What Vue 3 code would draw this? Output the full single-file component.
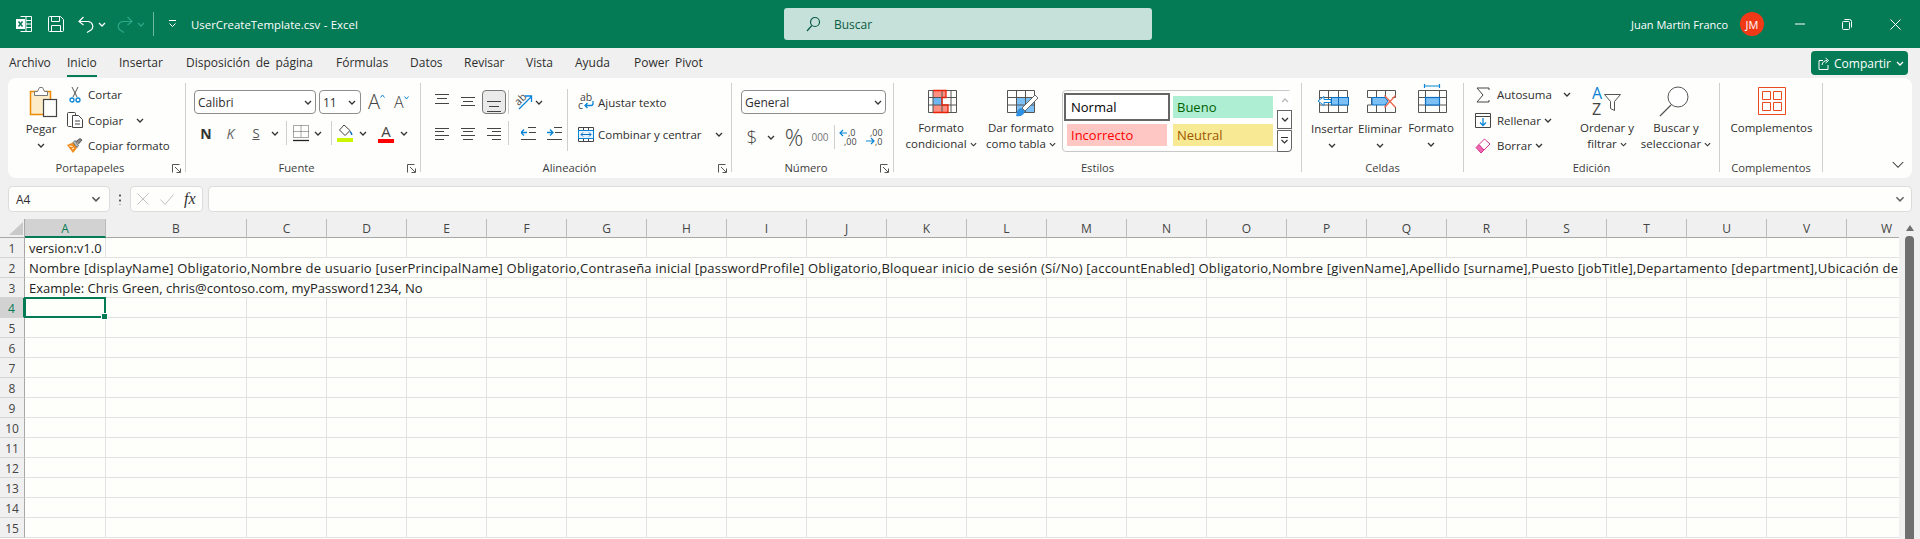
<template>
  <div class="app">
    <svg class="defs" width="0" height="0">
      <symbol id="chev" viewBox="0 0 8 5">
        <path d="M1 1l3 3 3-3" fill="none" stroke="currentColor" stroke-width="1.3" />
      </symbol>
      <symbol id="launcher" viewBox="0 0 9 9">
        <path d="M.5 8.5V.5h7M3 3l5 5M8.5 4.5v4h-4" fill="none" stroke="#555" stroke-width="1" />
      </symbol>
    </svg>

    <header class="titlebar">
      <div class="title-left">
        <svg class="qat-excel" width="16" height="16" viewBox="0 0 16 16">
          <path d="M4.5.5h11v15h-11M10 .5v15M10 4.5h5.5M10 8h5.5M10 11.5h5.5" fill="none" stroke="#fff" />
          <rect x="0" y="3" width="9" height="10" fill="#fff" />
          <path d="M2.5 5.5l4 5M6.5 5.5l-4 5" stroke="#047a55" stroke-width="1.5" />
        </svg>
        <svg class="qat-save" width="16" height="16" viewBox="0 0 16 16">
          <path d="M.5 1.5a1 1 0 0 1 1-1h11l3 3v11a1 1 0 0 1-1 1h-13a1 1 0 0 1-1-1zM3.5.5v5h8v-5M3.5 15.500v-6h9v6" fill="none" stroke="#fff" />
        </svg>
        <svg class="qat-undo" width="16" height="18" viewBox="0 0 16 18">
          <path d="M5.500 2L1 6.500 5.500 10M1 6.500h9a4.800 4.800 0 0 1 3 8.500L9 17.500" fill="none" stroke="#fff" stroke-width="1.200" />
        </svg>
        <svg class="chev qat-chev"><use href="#chev" /></svg>
        <svg class="qat-redo" width="16" height="18" viewBox="0 0 16 18">
          <path d="M10.500 2L15 6.500 10.500 10M15 6.500H6a4.800 4.800 0 0 0-3 8.500l4 2.500" fill="none" stroke="#2ba888" stroke-width="1.200" />
        </svg>
        <svg class="chev qat-chev dim"><use href="#chev" /></svg>
        <span class="qat-sep"></span>
        <svg class="qat-custom" width="9" height="8" viewBox="0 0 9 8">
          <path d="M1 .5h7M1.500 3.500L4.500 6.500l3-3" fill="none" stroke="#fff" />
        </svg>
        <span class="doc-title">UserCreateTemplate.csv - Excel</span>
      </div>
      <div class="search">
        <svg width="15" height="16" viewBox="0 0 15 16">
          <circle cx="9" cy="6" r="4.500" fill="none" stroke="#0a5c44" stroke-width="1.200" />
          <path d="M5.800 9.500L1 15" stroke="#0a5c44" stroke-width="1.200" />
        </svg>
        <span>Buscar</span>
      </div>
      <div class="title-right">
        <span class="user">Juan Martín Franco</span>
        <span class="avatar">JM</span>
        <svg class="win-min" width="10" height="10" viewBox="0 0 10 10"><path d="M0 5h10" stroke="#fff" /></svg>
        <svg class="win-restore" width="10" height="11" viewBox="0 0 10 11">
          <path d="M.5 3.500a1 1 0 0 1 1-1h5a1 1 0 0 1 1 1v6a1 1 0 0 1-1 1h-5a1 1 0 0 1-1-1zM2.500.5h5a2 2 0 0 1 2 2v6" fill="none" stroke="#fff" />
        </svg>
        <svg class="win-close" width="11" height="11" viewBox="0 0 11 11"><path d="M.5.5l10 10M10.500.5l-10 10" stroke="#fff" /></svg>
      </div>
    </header>

    <nav class="tabs">
      <div class="tablist">
        <span v-for="t in tabs" :key="t" class="tab" :class="{ active: t === 'Inicio' }"><span>{{ t }}</span></span>
      </div>
      <button class="share">
        <svg width="12" height="13" viewBox="0 0 12 13">
          <path d="M5 3.500H1v9h9V8M4 8c.5-3 2.500-4.500 5-4.500M7.500 1L10.500 3.500 7.500 6" fill="none" stroke="#fff" />
        </svg>
        <span>Compartir</span>
        <svg class="chev"><use href="#chev" /></svg>
      </button>
    </nav>

    <section class="ribbon">
      <!-- Portapapeles -->
      <div class="group g-clip">
        <div class="group-body">
          <div class="big pegar">
            <svg class="big-icon" width="38" height="37" viewBox="0 0 38 37">
              <rect x="8.500" y="8.500" width="20" height="23" fill="#fdecc8" stroke="#ed8b00" stroke-width="1.500" />
              <path d="M12.500 12.500v-4h3l2-4h3l2 4h3v4z" fill="#fff" stroke="#777" />
              <rect x="21.500" y="16.500" width="13" height="17" fill="#fdfdfb" stroke="#444" stroke-width="1.200" />
            </svg>
            <span class="big-text">Pegar</span>
            <span class="big-text"><svg class="chev"><use href="#chev" /></svg></span>
          </div>
          <div class="small-list">
            <div class="small-row">
              <span class="small-ico">
                <svg width="12" height="16" viewBox="0 0 12 16">
                  <path d="M3 0l5 10M9 0L4 10" stroke="#555" fill="none" />
                  <circle cx="3" cy="13" r="2" fill="none" stroke="#0a84d6" stroke-width="1.300" />
                  <circle cx="9" cy="13" r="2" fill="none" stroke="#0a84d6" stroke-width="1.300" />
                </svg>
              </span>
              <span>Cortar</span>
            </div>
            <div class="small-row">
              <span class="small-ico">
                <svg width="16" height="16" viewBox="0 0 16 16">
                  <path d="M4.500 14.500h-3a1 1 0 0 1-1-1v-12a1 1 0 0 1 1-1h6a1 1 0 0 1 1 1v2" fill="none" stroke="#444" />
                  <path d="M5.500 3.500h6l4 4v8h-10zM8 9h5M8 12h5" fill="#fff" stroke="#444" />
                </svg>
              </span>
              <span>Copiar</span>
              <svg class="chev copy-chev"><use href="#chev" /></svg>
            </div>
            <div class="small-row">
              <span class="small-ico">
                <svg width="16" height="15" viewBox="0 0 16 15">
                  <path d="M0 7l6-2.500 4 5.500-4 5z" fill="#f28c1e" />
                  <path d="M2.500 8l3 .5M5 11l2-1" stroke="#fff" />
                  <path d="M6 4.500l2-2 3.500 5-1.500 2z" fill="#bbb" stroke="#555" stroke-width=".8" />
                  <path d="M9 3.500L13 .5 15 2l-3.500 4" fill="#888" stroke="#444" stroke-width=".8" />
                </svg>
              </span>
              <span>Copiar formato</span>
            </div>
          </div>
        </div>
        <div class="group-label">
          <span>Portapapeles</span>
          <svg class="launcher"><use href="#launcher" /></svg>
        </div>
      </div>

      <!-- Fuente -->
      <div class="group g-font">
        <div class="group-body col">
          <div class="font-row1">
            <div class="combo font-name"><span>Calibri</span><svg class="chev"><use href="#chev" /></svg></div>
            <div class="combo font-size"><span>11</span><svg class="chev"><use href="#chev" /></svg></div>
            <span class="grow-a big-a">A<svg width="5" height="4" viewBox="0 0 5 4"><path d="M.5 3.500l2-2.500 2 2.500" fill="none" stroke="#0a84d6" /></svg></span>
            <span class="grow-a small-a">A<svg width="5" height="4" viewBox="0 0 5 4"><path d="M.5.5l2 2.500 2-2.500" fill="none" stroke="#0a84d6" /></svg></span>
          </div>
          <div class="font-row2">
            <b class="fmt-n">N</b>
            <i class="fmt-k">K</i>
            <u class="fmt-s">S</u>
            <svg class="chev"><use href="#chev" /></svg>
            <span class="vsep"></span>
            <svg width="16" height="17" viewBox="0 0 16 17">
              <path d="M.5.500h15v12H.5zM8 .5v12M.5 6.500h15" fill="none" stroke="#555" stroke-dasharray="1 1" />
              <path d="M0 15.500h16" stroke="#222" stroke-width="1.300" />
            </svg>
            <svg class="chev"><use href="#chev" /></svg>
            <span class="vsep"></span>
            <svg width="16" height="18" viewBox="0 0 16 18">
              <path d="M7 1l6 5.500-5 5-5.500-5.500z" fill="none" stroke="#444" />
              <path d="M13 7.500c1.500 1.500 2 2.500 1.500 3.500" fill="none" stroke="#0a6ec2" stroke-width="1.500" />
              <rect y="14" width="16" height="4" fill="#ccf500" />
            </svg>
            <svg class="chev"><use href="#chev" /></svg>
            <span class="color-a">A<i></i></span>
            <svg class="chev"><use href="#chev" /></svg>
          </div>
        </div>
        <div class="group-label">
          <span>Fuente</span>
          <svg class="launcher"><use href="#launcher" /></svg>
        </div>
      </div>

      <!-- Alineación -->
      <div class="group g-align">
        <div class="group-body">
          <div class="align-left">
            <div class="align-row1">
              <svg width="14" height="24" viewBox="0 0 14 24"><path d="M0 4.500h14M2 8.500h10M0 13.500h14" stroke="#444" /></svg>
              <svg width="14" height="24" viewBox="0 0 14 24"><path d="M0 7.500h14M2 11.500h10M0 15.500h14" stroke="#444" /></svg>
              <span class="align-on">
                <svg width="14" height="24" viewBox="0 0 14 24"><path d="M0 11.500h14M2 16.500h10M0 21.500h14" stroke="#444" /></svg>
              </span>
              <span class="vsep"></span>
              <svg class="text-ico" width="18" height="18" viewBox="0 0 18 18">
                <text x="1" y="11" transform="rotate(-45 5 9)" class="ico-text">ab</text>
                <path d="M4 16L16 4M10 3h6.500v6" fill="none" stroke="#0a84d6" stroke-width="1.300" />
              </svg>
              <svg class="chev"><use href="#chev" /></svg>
            </div>
            <div class="align-row2">
              <svg width="14" height="24" viewBox="0 0 14 24"><path d="M0 7.500h14M0 10.500h9M0 14.500h14M0 18.500h9" stroke="#444" /></svg>
              <svg width="14" height="24" viewBox="0 0 14 24"><path d="M0 7.500h14M2 10.500h10M0 14.500h14M2 18.500h10" stroke="#444" /></svg>
              <svg width="14" height="24" viewBox="0 0 14 24"><path d="M0 7.500h14M5 10.500h9M0 14.500h14M5 18.500h9" stroke="#444" /></svg>
              <span class="vsep"></span>
              <svg width="15" height="24" viewBox="0 0 15 24">
                <path d="M7 6.500h8M8 11.500h7M0 18.500h15" stroke="#444" />
                <path d="M0 11.500h6M3 8.500l-3 3 3 3" fill="none" stroke="#0a84d6" stroke-width="1.300" />
              </svg>
              <svg width="15" height="24" viewBox="0 0 15 24">
                <path d="M7 6.500h8M8 11.500h7M0 18.500h15" stroke="#444" />
                <path d="M0 11.500h6M3 8.500l3 3-3 3" fill="none" stroke="#0a84d6" stroke-width="1.300" />
              </svg>
            </div>
          </div>
          <span class="align-sep"></span>
          <div class="align-right">
            <div class="small-row wrap-row">
              <svg class="text-ico" width="16" height="18" viewBox="0 0 16 18">
                <text x="2" y="8" class="ico-text">ab</text>
                <text x="0" y="16" class="ico-text">c</text>
                <path d="M15 8v2.500a2 2 0 0 1-2 2H7M9.500 10l-2.500 2.500 2.500 2.500" fill="none" stroke="#0a84d6" stroke-width="1.300" />
              </svg>
              <span>Ajustar texto</span>
            </div>
            <div class="small-row wrap-row">
              <svg width="16" height="15" viewBox="0 0 16 15">
                <path d="M.5.500h15v14H.5zM.5 3.500h15M.5 11.500h15M5.500.5v3M10.500.5v3M5.500 11.500v3M10.500 11.500v3" fill="#fff" stroke="#444" />
                <rect x=".5" y="3.500" width="15" height="8" fill="#e6f2fc" stroke="#0a84d6" />
                <path d="M3 7.500h10M5 5.500l-2 2 2 2M11 5.500l2 2-2 2" fill="none" stroke="#0a6ec2" />
              </svg>
              <span>Combinar y centrar</span>
              <svg class="chev merge-chev"><use href="#chev" /></svg>
            </div>
          </div>
        </div>
        <div class="group-label">
          <span>Alineación</span>
          <svg class="launcher"><use href="#launcher" /></svg>
        </div>
      </div>

      <!-- Número -->
      <div class="group g-num">
        <div class="group-body col">
          <div class="combo num-format"><span>General</span><svg class="chev"><use href="#chev" /></svg></div>
          <div class="num-row">
            <span class="num-dollar">$</span>
            <svg class="chev"><use href="#chev" /></svg>
            <span class="num-pct">%</span>
            <span class="num-000">000</span>
            <span class="vsep"></span>
            <svg class="text-ico" width="17" height="18" viewBox="0 0 17 18">
              <path d="M0 5h7M3 2L0 5l3 3" fill="none" stroke="#0a84d6" stroke-width="1.200" />
              <text x="8" y="8" class="dec-text">,0</text>
              <text x="4" y="17" class="dec-text">,00</text>
            </svg>
            <svg class="text-ico" width="17" height="18" viewBox="0 0 17 18">
              <text x="4" y="8" class="dec-text">,00</text>
              <path d="M0 13h8M5 10l3 3-3 3" fill="none" stroke="#0a84d6" stroke-width="1.200" />
              <text x="9" y="17" class="dec-text">,0</text>
            </svg>
          </div>
        </div>
        <div class="group-label">
          <span>Número</span>
          <svg class="launcher"><use href="#launcher" /></svg>
        </div>
      </div>

      <!-- Estilos -->
      <div class="group g-styles">
        <div class="group-body">
          <div class="big cf">
            <svg class="big-icon" width="80" height="37" viewBox="0 0 80 37">
              <rect x="32" y="7" width="13" height="7.500" fill="#ff8f80" />
              <rect x="32" y="14.500" width="9" height="7.500" fill="#6db8f2" />
              <rect x="32" y="22" width="15" height="7.500" fill="#ff8f80" />
              <path d="M27.500 7.500h28v22h-28zM27.500 14.500h28M27.500 22h28M32 7.500v22M41 7.500v22M50 7.500v22" fill="none" stroke="#555" />
              <path d="M32 7.500h13v7h-4v7.500h6v7.500H32" fill="none" stroke="#e8230a" stroke-width="1.300" />
            </svg>
            <span class="big-text">Formato</span>
            <span class="big-text">condicional<svg class="chev inline"><use href="#chev" /></svg></span>
          </div>
          <div class="big table-fmt">
            <svg class="big-icon" width="80" height="37" viewBox="0 0 80 37">
              <rect x="35" y="14" width="18" height="15" fill="#7cc0f5" />
              <path d="M26.500 7.500h27v22h-27zM26.500 14.500h27M26.500 22h27M35.500 7.500v22M44.500 7.500v22" fill="none" stroke="#555" />
              <path d="M35 33c1-5 2-8 6-8l3 3c-1 4-4 6-9 5z" fill="#2f8fe0" />
              <path d="M41 25L54 12l3 3-13 13z" fill="#fff" stroke="#666" />
            </svg>
            <span class="big-text">Dar formato</span>
            <span class="big-text">como tabla<svg class="chev inline"><use href="#chev" /></svg></span>
          </div>
          <div class="gallery">
            <div class="gallery-cells">
              <div class="style-cell s-normal">Normal</div>
              <div class="style-cell s-good">Bueno</div>
              <div class="style-cell s-bad">Incorrecto</div>
              <div class="style-cell s-neutral">Neutral</div>
            </div>
            <div class="gallery-btns">
              <span class="gbtn up"><svg class="chev"><use href="#chev" /></svg></span>
              <span class="gbtn"><svg class="chev"><use href="#chev" /></svg></span>
              <span class="gbtn more">
                <svg width="9" height="8" viewBox="0 0 9 8"><path d="M1 .5h7M1.500 3L4.500 6l3-3" fill="none" stroke="#333" stroke-width="1.200" /></svg>
              </span>
            </div>
          </div>
        </div>
        <div class="group-label plain"><span>Estilos</span></div>
      </div>

      <!-- Celdas -->
      <div class="group g-cells">
        <div class="group-body">
          <div class="big c-insert">
            <svg class="big-icon" width="46" height="37" viewBox="0 0 46 37">
              <path d="M10.500 7.500h28v22h-28zM10.500 14.500h28M10.500 22h28M19.500 7.500v22M29.500 7.500v22" fill="none" stroke="#555" />
              <rect x="22.500" y="14.500" width="17" height="7.500" fill="#7cc0f5" stroke="#0a6ec2" />
              <path d="M29.500 14.500V22" stroke="#0a6ec2" />
              <path d="M22 16.500h-7v-3l-6 4.500 6 4.500v-3h7z" fill="#fff" stroke="#0a84d6" />
            </svg>
            <span class="big-text">Insertar</span>
            <span class="big-text"><svg class="chev"><use href="#chev" /></svg></span>
          </div>
          <div class="big c-delete">
            <svg class="big-icon" width="50" height="37" viewBox="0 0 50 37">
              <path d="M12.500 7.500h28v7h-3M12.500 7.500v7h4v7.500h-4v7.500h28V24M21.500 7.500v7M30.500 7.500v7M21.500 22v7.500M30.500 22v7.500" fill="none" stroke="#555" />
              <path d="M17 14.500h13l3 3.700-3 3.800H17z" fill="#7cc0f5" stroke="#0a6ec2" />
              <path d="M29.500 12.500l11 12M40.500 12.500l-11 12" stroke="#f0624a" stroke-width="1.200" />
            </svg>
            <span class="big-text">Eliminar</span>
            <span class="big-text"><svg class="chev"><use href="#chev" /></svg></span>
          </div>
          <div class="big c-format">
            <svg class="big-icon" width="52" height="37" viewBox="0 0 52 37">
              <path d="M19 3h16M19.500 1v4M34.500 1v4" fill="none" stroke="#0a84d6" stroke-width="1.200" />
              <path d="M13.500 7.500h28v22h-28zM13.500 14.500h28M13.500 22h28M20.500 7.500v22M34.500 7.500v22" fill="none" stroke="#555" />
              <rect x="20.500" y="14.500" width="14" height="7.500" fill="#7cc0f5" stroke="#0a6ec2" stroke-width="1.200" />
            </svg>
            <span class="big-text">Formato</span>
            <span class="big-text"><svg class="chev"><use href="#chev" /></svg></span>
          </div>
        </div>
        <div class="group-label plain"><span>Celdas</span></div>
      </div>

      <!-- Edición -->
      <div class="group g-edit">
        <div class="group-body">
          <div class="small-list edit-list">
            <div class="small-row">
              <span class="small-ico edit-ico">
                <svg width="14" height="16" viewBox="0 0 14 16"><path d="M13 3V1H1l6 7-6 7h12v-2" fill="none" stroke="#444" /></svg>
              </span>
              <span>Autosuma</span>
              <svg class="chev auto-chev"><use href="#chev" /></svg>
            </div>
            <div class="small-row">
              <span class="small-ico edit-ico">
                <svg width="16" height="15" viewBox="0 0 16 15">
                  <path d="M.5.500h15v14H.5zM.5 3.500h15" fill="none" stroke="#444" />
                  <path d="M8 5v7M5 9.500l3 3 3-3" fill="none" stroke="#0a84d6" stroke-width="1.300" />
                </svg>
              </span>
              <span>Rellenar</span>
              <svg class="chev gap-chev"><use href="#chev" /></svg>
            </div>
            <div class="small-row">
              <span class="small-ico edit-ico">
                <svg width="16" height="16" viewBox="0 0 16 16">
                  <path d="M1 9.500L6 15l3-3-5-5.500z" fill="#f067b0" stroke="#d4348c" />
                  <path d="M4 6.500L9.500 1 15 6 9 12z" fill="#fff" stroke="#d4348c" />
                </svg>
              </span>
              <span>Borrar</span>
              <svg class="chev gap-chev"><use href="#chev" /></svg>
            </div>
          </div>
          <div class="big e-sort">
            <svg class="big-icon" width="60" height="37" viewBox="0 0 60 37">
              <text x="15" y="16" class="sort-a">A</text>
              <text x="15" y="32" class="sort-z">Z</text>
              <path d="M27.500 11.500h16l-6 7v9l-4-2v-7z" fill="none" stroke="#555" />
            </svg>
            <span class="big-text">Ordenar y</span>
            <span class="big-text">filtrar<svg class="chev inline"><use href="#chev" /></svg></span>
          </div>
          <div class="big e-find">
            <svg class="big-icon" width="78" height="37" viewBox="0 0 78 37">
              <circle cx="41" cy="14" r="10" fill="#fff" stroke="#555" />
              <path d="M34 22L23 33" stroke="#555" stroke-width="1.200" />
            </svg>
            <span class="big-text">Buscar y</span>
            <span class="big-text">seleccionar<svg class="chev inline"><use href="#chev" /></svg></span>
          </div>
        </div>
        <div class="group-label plain"><span>Edición</span></div>
      </div>

      <!-- Complementos -->
      <div class="group g-addins">
        <div class="group-body">
          <div class="big addins">
            <svg class="big-icon" width="103" height="37" viewBox="0 0 103 37">
              <path d="M38.500 4.500h27v27h-27zM42.500 8.500h8v8h-8zM53.500 8.500h8v8h-8zM42.500 19.500h8v8h-8zM53.500 19.500h8v8h-8z" fill="none" stroke="#ea4a1f" />
            </svg>
            <span class="big-text">Complementos</span>
          </div>
        </div>
        <div class="group-label plain"><span>Complementos</span></div>
      </div>

      <div class="collapse">
        <svg class="collapse-chev" viewBox="0 0 8 5"><path d="M.5.500l3.500 3.500L7.500.5" fill="none" stroke="#333" stroke-width=".7" /></svg>
      </div>
    </section>

    <div class="formula-bar">
      <div class="box name-box"><span>A4</span><svg class="chev"><use href="#chev" /></svg></div>
      <span class="dots"></span>
      <div class="box fn-box">
        <svg width="12" height="12" viewBox="0 0 12 12"><path d="M.5.500l11 11M11.500.5l-11 11" stroke="#c2c2c2" /></svg>
        <svg width="14" height="11" viewBox="0 0 14 11"><path d="M.5 5.500L5 10.500 13.500.5" fill="none" stroke="#c2c2c2" /></svg>
        <span class="fx">fx</span>
      </div>
      <div class="box formula-input"><svg class="chev"><use href="#chev" /></svg></div>
    </div>

    <main class="sheet-wrap">
      <div class="sheet">
        <div class="row head-row">
          <div class="row-head corner">
            <svg width="14" height="13" viewBox="0 0 14 13"><path d="M14 0v13H0z" fill="#c9c9c9" /></svg>
          </div>
          <div v-for="c in columns" :key="c" class="col-head" :class="[colClass(c), { selected: c === 'A' }]">{{ c }}</div>
        </div>
        <div v-for="n in rowCount" :key="n" class="row">
          <div class="row-head" :class="{ selected: n === 4 }">{{ n }}</div>
          <div v-if="cellText[n]" class="cell text-cell" :class="{ 'long-text': n === 2 }" :style="{ width: spanWidth(cellText[n].span) + 'px' }">
            <span>{{ cellText[n].text }}</span>
          </div>
          <div v-for="c in restColumns(n)" :key="c" class="cell" :class="[colClass(c), { active: n === 4 && c === 'A' }]"></div>
        </div>
      </div>
      <aside class="scrollbar">
        <span class="sb-up"></span>
        <span class="sb-thumb"></span>
      </aside>
    </main>
  </div>
</template>

<script setup>
const tabs = ['Archivo', 'Inicio', 'Insertar', 'Disposición de página', 'Fórmulas', 'Datos', 'Revisar', 'Vista', 'Ayuda', 'Power Pivot']
const columns = 'ABCDEFGHIJKLMNOPQRSTUVW'.split('')
const rowCount = 15

const cellText = {
  1: { span: 1, text: 'version:v1.0' },
  2: {
    span: 23,
    text: 'Nombre [displayName] Obligatorio,Nombre de usuario [userPrincipalName] Obligatorio,Contraseña inicial [passwordProfile] Obligatorio,Bloquear inicio de sesión (Sí/No) [accountEnabled] Obligatorio,Nombre [givenName],Apellido [surname],Puesto [jobTitle],Departamento [department],Ubicación de'
  },
  3: { span: 5, text: 'Example: Chris Green, chris@contoso.com, myPassword1234, No' }
}

const colClass = (c) => (c === 'A' ? 'col-a' : c === 'B' ? 'col-b' : 'col-n')

const colWidth = (i) => (i === 0 ? 81 : i === 1 ? 141 : 80)

const spanWidth = (span) => {
  let w = 0
  for (let i = 0; i < span; i++) w += colWidth(i)
  return w
}

const restColumns = (n) => (cellText[n] ? columns.slice(cellText[n].span) : columns)
</script>

<style>
html, body {
  margin: 0;
  overflow: hidden;
  background: #f0f0f0;
}
</style>

<style scoped>
.app {
  width: 1920px;
  height: 539px;
  overflow: hidden;
  font-family: "Open Sans", "Noto Sans", sans-serif;
  font-size: 12px;
  color: #2e2e2e;
  background: #f0f0f0;
  --green: #047a55;
}
.defs { position: absolute; }
svg { display: block; flex: none; }
.text-ico { overflow: visible; }
.chev { width: 8px; height: 5px; color: #333; flex: none; }

/* title bar */
.titlebar {
  height: 48px;
  background: var(--green);
  color: #fff;
  display: flex;
  align-items: center;
}
.title-left {
  width: 784px;
  padding-left: 16px;
  box-sizing: border-box;
  display: flex;
  align-items: center;
}
.qat-save { margin-left: 16px; }
.qat-undo { margin-left: 14px; }
.qat-chev { margin-left: 4px; color: #fff; }
.qat-chev.dim { color: #2ba888; }
.qat-redo { margin-left: 11px; }
.qat-sep { width: 1px; height: 24px; background: #6fb8a0; margin-left: 8px; }
.qat-custom { margin-left: 14px; }
.doc-title { margin-left: 14px; font-size: 11.4px; word-spacing: .5px; }
.search {
  width: 368px;
  height: 32px;
  background: #c5e1d9;
  border-radius: 3px;
  color: #0a5c44;
  display: flex;
  align-items: center;
  padding-left: 22px;
  box-sizing: border-box;
}
.search span { margin-left: 13px; }
.title-right {
  flex: 1;
  display: flex;
  align-items: center;
  padding-left: 479px;
}
.user { font-size: 11px; width: 109px; white-space: nowrap; }
.avatar {
  width: 24px;
  height: 24px;
  flex: none;
  border-radius: 50%;
  background: #f03a17;
  font-size: 11px;
  display: flex;
  align-items: center;
  justify-content: center;
}
.win-min { margin-left: 31px; }
.win-restore { margin-left: 37px; }
.win-close { margin-left: 38px; }

/* tabs */
.tabs {
  height: 30px;
  display: flex;
  align-items: stretch;
  justify-content: space-between;
}
.tablist {
  display: grid;
  grid-template-columns: 58px 52px 67px 150px 74px 54px 62px 49px 59px 80px;
  padding-left: 9px;
}
.tab { line-height: 29px; white-space: nowrap; word-spacing: 2.5px; }
.tab.active span {
  display: inline-block;
  height: 27px;
  border-bottom: 2px solid var(--green);
}
.share {
  margin: 3px 12px 3px 0;
  width: 97px;
  background: var(--green);
  color: #fff;
  border: none;
  border-radius: 4px;
  font: inherit;
  display: flex;
  align-items: center;
  padding: 0 0 0 7px;
}
.share span { margin-left: 4px; }
.share .chev { color: #fff; margin-left: 5px; }

/* ribbon */
.ribbon {
  margin: 0 8px;
  height: 100px;
  box-sizing: border-box;
  padding-top: 5px;
  background: #fefefc;
  border-radius: 8px;
  display: flex;
  font-size: 11.5px;
}
.group {
  height: 89px;
  box-sizing: border-box;
  border-right: 1px solid #cfcfcf;
  flex: none;
  display: flex;
  flex-direction: column;
}
.g-clip { width: 178px; }
.g-font { width: 235px; }
.g-align { width: 311px; }
.g-num { width: 162px; }
.g-styles { width: 408px; }
.g-cells { width: 162px; }
.g-edit { width: 256px; }
.g-addins { width: 103px; }
.group-body { height: 77px; display: flex; }
.group-body.col { flex-direction: column; }
.group-label {
  height: 12px;
  line-height: 16px;
  font-size: 11.2px;
  color: #3c3c3c;
  display: flex;
}
.group-label span { flex: 1; text-align: center; white-space: nowrap; }
.launcher { width: 9px; height: 9px; margin: 4px 4px 0 0; }

.big {
  display: flex;
  flex-direction: column;
  align-items: center;
  flex: none;
}
.big-text {
  height: 16px;
  line-height: 16px;
  white-space: nowrap;
  display: flex;
  align-items: center;
  justify-content: center;
}
.chev.inline { margin-left: 3px; width: 7px; }
.small-list { margin-top: -1px; }
.small-row {
  height: 25.5px;
  display: flex;
  align-items: center;
  white-space: nowrap;
}
.small-ico {
  width: 22px;
  display: flex;
  justify-content: center;
  padding-right: 4px;
  box-sizing: border-box;
}
.vsep { width: 1px; height: 24px; background: #cfcfcf; }
.ico-text { font-size: 10.5px; fill: #444; }
.dec-text { font-size: 9px; fill: #444; }

.pegar { width: 38px; margin-left: 14px; }
.pegar .big-icon, .c-insert .big-icon, .c-delete .big-icon { margin-bottom: 1px; }
.g-clip .small-list { margin-left: 6px; }
.copy-chev { margin-left: 13px; }

/* font */
.font-row1 { margin: 7px 0 0 8px; display: flex; align-items: center; }
.combo {
  height: 24px;
  box-sizing: border-box;
  border: 1px solid #8d8d8d;
  border-radius: 4px;
  background: #fff;
  font-size: 12px;
  display: flex;
  align-items: center;
  justify-content: space-between;
  padding: 0 3px;
  flex: none;
}
.font-name { width: 122px; }
.font-size { width: 42px; margin-left: 3px; padding-right: 4px; }
.grow-a { display: flex; color: #444; line-height: 1; font-weight: 300; }
.grow-a svg { margin-top: 2px; }
.big-a { font-size: 20px; margin-left: 7px; }
.small-a { font-size: 16px; margin-left: 9px; }
.font-row2 {
  margin: 7px 0 0 8px;
  height: 24px;
  display: grid;
  grid-template-columns: 24px 25px 26px 12px 10px 20px 14px 12px 16px 20px 26px 10px;
  align-items: center;
  justify-items: center;
}
.fmt-n { font-size: 14px; color: #333; }
.fmt-k { font-size: 14px; color: #666; }
.fmt-s { font-size: 13px; color: #555; }
.color-a {
  width: 16px;
  font-size: 15px;
  line-height: 14px;
  color: #444;
  text-align: center;
  display: block;
}
.color-a i { display: block; height: 4px; background: #f00; margin-top: 1px; }

/* alignment */
.align-left { width: 138px; margin-left: 8px; }
.align-row1, .align-row2 {
  height: 24px;
  display: grid;
  align-items: center;
  justify-items: center;
}
.align-row1 {
  margin-top: 7px;
  grid-template-columns: 26px 25px 28px 4px 23px 8px;
}
.align-row2 {
  margin-top: 7px;
  grid-template-columns: 26px 25px 28px 8px 25px 26px;
}
.align-row1 .vsep, .align-row2 .vsep { justify-self: start; }
.align-on {
  width: 24px;
  height: 24px;
  box-sizing: border-box;
  border: 1px solid #777;
  border-radius: 4px;
  background: #eaeaea;
  display: flex;
  justify-content: center;
}
.align-on svg { margin-top: -1px; }
.align-sep { width: 1px; height: 62px; margin-top: 6px; background: #cfcfcf; }
.align-right { margin: 7px 0 0 10px; }
.wrap-row { height: 24px; margin-bottom: 8px; }
.wrap-row span { margin-left: 4px; }
.merge-chev { margin-left: 13px; }

/* number */
.num-format { width: 145px; margin: 7px 0 0 9px; }
.num-row {
  margin: 7px 0 0 9px;
  height: 24px;
  display: grid;
  grid-template-columns: 22px 16px 30px 22px 6px 23px 29px;
  align-items: center;
  justify-items: center;
}
.num-dollar { font-size: 19px; font-weight: 300; color: #444; }
.num-pct { font-size: 23px; font-weight: 300; color: #444; }
.num-000 { font-size: 10px; color: #777; }

/* styles */
.cf { width: 80px; margin-left: 7px; }
.table-fmt { width: 80px; }
.gallery {
  width: 230px;
  height: 62px;
  box-sizing: border-box;
  margin: 7px 0 0 1px;
  border: 1px solid #c8c8c8;
  border-radius: 4px;
  display: flex;
  font-size: 13px;
}
.gallery-cells {
  width: 214px;
  display: grid;
  grid-template-columns: 110px 104px;
  grid-template-rows: 32px 28px;
}
.style-cell {
  display: flex;
  align-items: center;
  padding-left: 4px;
  box-sizing: border-box;
}
.s-normal { margin: 2px 3px 2px 1px; border: 2px solid #666; padding-left: 5px; color: #000; background: #fff; }
.s-good { margin: 5px 4px 5px 0; background: #aeeed3; color: #006100; }
.s-bad { margin: 1px 6px 5px 4px; background: #ffc7c4; color: #f00; }
.s-neutral { margin: 1px 4px 5px 0; background: #f8e994; color: #9c5700; }
.gallery-btns { width: 15px; display: flex; flex-direction: column; margin: 0 -1px -1px 0; }
.gbtn {
  height: 19px;
  box-sizing: border-box;
  border: 1px solid #666;
  display: flex;
  align-items: center;
  justify-content: center;
  background: #fff;
}
.gbtn.up { border-color: transparent; }
.gbtn.up .chev { transform: rotate(180deg); color: #bbb; }
.gbtn.more { height: 22px; border-radius: 0 0 4px 0; margin-top: 1px; }

/* cells */
.c-insert { width: 46px; margin-left: 7px; }
.c-delete { width: 50px; }
.c-format { width: 52px; }

/* edit */
.edit-list { width: 104px; margin-left: 9px; flex: none; }
.edit-ico { width: 24px; padding: 0 4px 0 0; }
.auto-chev { margin-left: auto; margin-right: 6px; }
.gap-chev { margin-left: 3px; }
.e-sort { width: 60px; }
.e-find { width: 78px; }
.sort-a { font-size: 16px; fill: #0a84d6; font-family: "Open Sans", sans-serif; }
.sort-z { font-size: 16px; fill: #444; font-family: "Open Sans", sans-serif; }

.addins { width: 103px; }
.collapse { flex: 1; display: flex; justify-content: flex-end; padding: 78px 8px 0 0; }
.collapse-chev { width: 12px; height: 8px; }

/* formula bar */
.formula-bar {
  height: 41px;
  box-sizing: border-box;
  padding: 8px 8px 7px;
  display: flex;
}
.box {
  height: 26px;
  box-sizing: border-box;
  background: #fefefc;
  border: 1px solid #dcdcdc;
  border-radius: 4px;
  display: flex;
  align-items: center;
}
.name-box { width: 102px; padding: 0 8px 0 7px; justify-content: space-between; }
.name-box .chev { width: 10px; height: 6px; color: #555; }
.dots {
  width: 2px;
  height: 12px;
  margin: 7px 9px 0 9px;
  background: radial-gradient(circle, #555 1px, transparent 1.200px) 0 0 / 2px 5px;
}
.fn-box { width: 73px; padding-left: 6px; }
.fn-box svg + svg { margin-left: 11px; }
.fx { font: italic 16px "Liberation Serif", serif; margin-left: 10px; color: #333; }
.formula-input { flex: 1; margin-left: 5px; justify-content: flex-end; padding-right: 6px; }
.formula-input .chev { width: 10px; height: 6px; color: #666; }

/* sheet */
.sheet-wrap { display: flex; height: 320px; }
.sheet { width: 1899px; overflow: hidden; background: #fefefa; }
.row { display: flex; height: 20px; width: 2000px; }
.head-row { height: 19px; }
.row-head {
  width: 25px;
  flex: none;
  box-sizing: border-box;
  background: #f0f0f0;
  border-right: 1px solid #a8a8a8;
  border-bottom: 1px solid #d4d4d4;
  padding-top: 2px;
  display: flex;
  align-items: center;
  justify-content: center;
  color: #444;
}
.row-head.selected { background: #d2d2d2; color: var(--green); border-right: 2px solid var(--green); }
.corner {
  border-bottom: 1px solid #a8a8a8;
  justify-content: flex-start;
  padding: 0 0 0 9px;
}
.col-a { width: 81px; }
.col-b { width: 141px; }
.col-n { width: 80px; }
.col-head {
  flex: none;
  box-sizing: border-box;
  background: #f0f0f0;
  border-right: 1px solid #bbb;
  border-bottom: 1px solid #a8a8a8;
  text-align: center;
  line-height: 19px;
  color: #444;
}
.col-head.selected {
  background: #d2d2d2;
  color: var(--green);
  border-bottom: 2px solid var(--green);
}
.cell {
  flex: none;
  box-sizing: border-box;
  border-right: 1px solid #e2e2e2;
  border-bottom: 1px solid #e2e2e2;
  position: relative;
}
.text-cell { padding-left: 4px; line-height: 21px; font-size: 13px; white-space: nowrap; overflow: hidden; color: #222; }
.long-text { letter-spacing: .19px; }
.cell.active::after {
  content: "";
  position: absolute;
  inset: -1px -1px -1px -1px;
  border: 2px solid var(--green);
}
.cell.active::before {
  content: "";
  position: absolute;
  right: -3px;
  bottom: -3px;
  width: 5px;
  height: 5px;
  background: var(--green);
  border: 1px solid #fff;
  z-index: 1;
}

.scrollbar {
  width: 21px;
  background: #f0f0f0;
  display: flex;
  flex-direction: column;
  align-items: center;
}
.sb-up {
  width: 0;
  height: 0;
  margin-top: 6px;
  border: 4px solid transparent;
  border-top: none;
  border-bottom: 6px solid #6f6f6f;
}
.sb-thumb {
  width: 9px;
  flex: 1;
  margin-top: 5px;
  background: #6f6f6f;
  border-radius: 4px 4px 0 0;
}
</style>
